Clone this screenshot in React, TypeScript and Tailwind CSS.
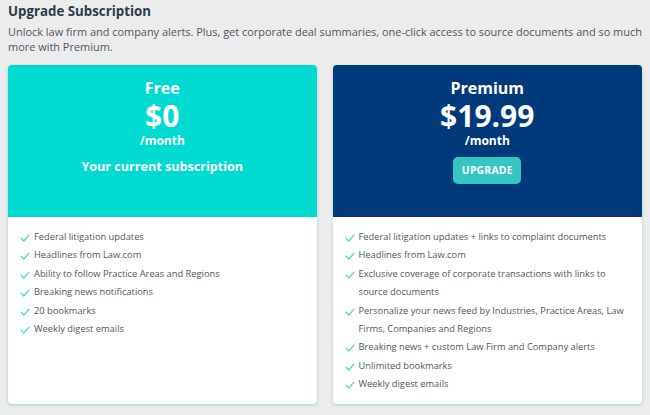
import React from "react";

const Check = () => (
  <svg width="10" height="8" viewBox="0 0 10 8" className="shrink-0 mt-[6px]" fill="none">
    <path d="M1 4.2 L3.8 7 L9 1.2" stroke="#45d6d2" strokeWidth="1.2" strokeLinecap="round" strokeLinejoin="round" />
  </svg>
);

const Feature = ({ children }: { children: React.ReactNode }) => (
  <li className="flex gap-[4px] text-[9.3px] leading-[18.4px] text-[#50565e]">
    <Check />
    <span>{children}</span>
  </li>
);

export default function App() {
  const free = [
    "Federal litigation updates",
    "Headlines from Law.com",
    "Ability to follow Practice Areas and Regions",
    "Breaking news notifications",
    "20 bookmarks",
    "Weekly digest emails",
  ];
  const premium = [
    "Federal litigation updates + links to complaint documents",
    "Headlines from Law.com",
    "Exclusive coverage of corporate transactions with links to source documents",
    "Personalize your news feed by Industries, Practice Areas, Law Firms, Companies and Regions",
    "Breaking news + custom Law Firm and Company alerts",
    "Unlimited bookmarks",
    "Weekly digest emails",
  ];
  return (
    <div
      className="w-[650px] h-[415px] bg-[#ececec] px-[8px] pt-[1px] overflow-hidden"
      style={{ fontFamily: '"Open Sans", sans-serif' }}
    >
      <h1 className="text-[13.3px] font-bold text-[#2c3b4e] leading-[20px]">Upgrade Subscription</h1>
      <p className="mt-[4px] text-[10.95px] leading-[14.5px] text-[#4d5663]">
        Unlock law firm and company alerts. Plus, get corporate deal summaries, one-click access to source documents and so much more with Premium.
      </p>
      <div className="mt-[11px] flex gap-[16px]">
        <div className="w-[309px] h-[339px] rounded-[4px] bg-white overflow-hidden shadow-[0_1px_3px_rgba(80,190,180,0.5)] flex flex-col">
          <div className="h-[152px] bg-[#00dbd1] flex flex-col items-center text-white pt-[13px]">
            <div className="text-[16px] font-bold leading-[20px]">Free</div>
            <div className="text-[30px] font-bold leading-[30px] mt-[3px] mb-[2px]">$0</div>
            <div className="text-[12px] font-bold leading-[16px]">/month</div>
            <div className="text-[12.6px] font-bold leading-[18px] mt-[9px]">Your current subscription</div>
          </div>
          <ul className="pl-[12px] pr-[10px] pt-[11px]">
            {free.map((f) => (
              <Feature key={f}>{f}</Feature>
            ))}
          </ul>
        </div>
        <div className="w-[310px] h-[339px] rounded-[4px] bg-white overflow-hidden shadow-[0_1px_3px_rgba(80,190,180,0.5)] flex flex-col">
          <div className="h-[152px] bg-[#013a7b] flex flex-col items-center text-white pt-[13px]">
            <div className="text-[16px] font-bold leading-[20px]">Premium</div>
            <div className="text-[30px] font-bold leading-[30px] mt-[3px] mb-[2px]">$19.99</div>
            <div className="text-[12px] font-bold leading-[16px]">/month</div>
            <button className="mt-[8px] w-[68px] h-[27px] rounded-[5px] bg-[#35c6c3] text-white text-[10.4px] font-bold tracking-[0.2px]">
              UPGRADE
            </button>
          </div>
          <ul className="pl-[12px] pr-[10px] pt-[11px]">
            {premium.map((f) => (
              <Feature key={f}>{f}</Feature>
            ))}
          </ul>
        </div>
      </div>
    </div>
  );
}
